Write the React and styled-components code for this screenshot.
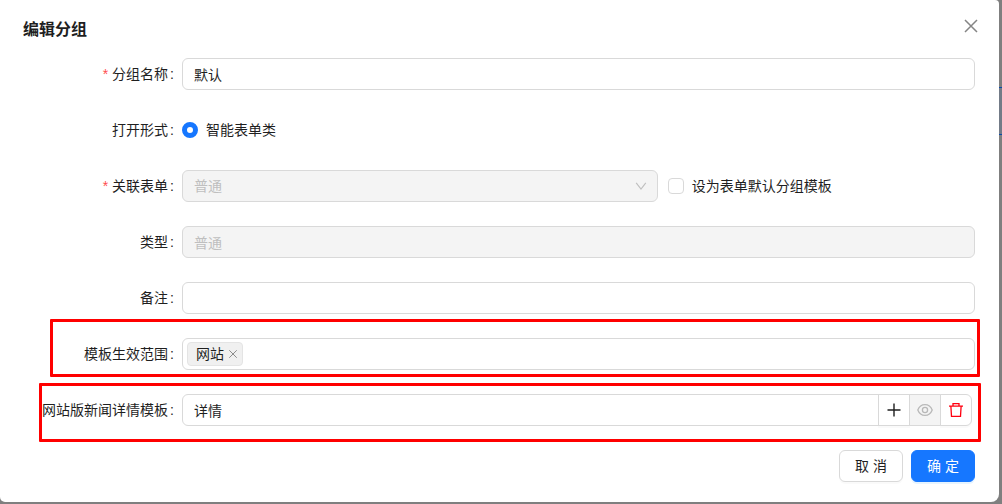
import React, { useState } from 'react'
import styled, { createGlobalStyle, css } from 'styled-components'

const GlobalStyle = createGlobalStyle`
  * {
    box-sizing: border-box;
  }

  body {
    margin: 0;
    background: #7f7f7f;
    color: #1f1f1f;
    font-family: 'Liberation Sans', 'Noto Sans CJK SC', sans-serif;
    font-size: 14px;
    line-height: 22px;
  }

  input, select, button {
    font: inherit;
    color: inherit;
  }
`

const Page = styled.div`
  display: grid;
  grid-template-columns: 1fr 3px;
  min-height: 100vh;
  align-items: start;
`

const Backdrop = styled.div`
  align-self: stretch;
  padding-top: 87px;
`

const ActiveItem = styled.div`
  height: 48px;
  background: #737b87;
  border: solid #0b4aa8;
  border-width: 1px 0;
`

const Dialog = styled.section`
  position: relative;
  padding: 20px 24px 20px 23px;
  background: white;
  border-radius: 0 4px 8px 5px;
`

const Title = styled.h1`
  margin: 0 0 18px;
  font-size: 16px;
  line-height: 20px;
  font-weight: 600;
`

const CloseButton = styled.button`
  position: absolute;
  top: 15px;
  right: 17px;
  display: flex;
  align-items: center;
  justify-content: center;
  width: 22px;
  height: 22px;
  padding: 0;
  border: 0;
  background: none;
  color: #858585;
`

const Form = styled.form`
  display: flex;
  flex-direction: column;
  gap: 24px;
`

const Row = styled.div`
  position: relative;
  display: grid;
  grid-template-columns: 159px 1fr;
  align-items: center;
  min-height: 32px;
`

/* Red outline drawn around a highlighted row */
const Marker = styled.span`
  position: absolute;
  inset: ${props => props.$inset};
  border: 3px solid #ff0000;
  border-radius: 1px;
  pointer-events: none;
`

const Label = styled.label`
  justify-self: end;
  white-space: nowrap;

  &::after {
    content: ':';
    margin: 0 8px 0 2px;
  }

  ${props => props.$required && css`
    &::before {
      content: '*';
      margin-right: 4px;
      color: #ff4d4f;
    }
  `}
`

const fieldStyle = css`
  width: 100%;
  height: 32px;
  border: 1px solid #d9d9d9;
  border-radius: 6px;
  background: white;

  &:disabled {
    background: #f4f4f4;
    color: #bfbfbf;
    opacity: 1;
  }
`

const TextInput = styled.input`
  ${fieldStyle}
  padding: 0 11px;
`

const SelectWrap = styled.div`
  display: grid;
  align-items: center;
  width: 60%;

  & > * {
    grid-area: 1 / 1;
  }

  & > svg {
    justify-self: end;
    margin-right: 11px;
    color: #bfbfbf;
    pointer-events: none;
  }
`

const Select = styled.select`
  ${fieldStyle}
  padding: 0 11px;
  appearance: none;
`

const Inline = styled.div`
  display: flex;
  align-items: center;
  gap: 10px;
`

const Choice = styled.label`
  display: flex;
  align-items: center;
  gap: 8px;
`

const Radio = styled.input`
  appearance: none;
  width: 16px;
  height: 16px;
  margin: 0;
  border: 1px solid #d9d9d9;
  border-radius: 50%;

  &:checked {
    border: 5px solid #1677ff;
  }
`

const Checkbox = styled.input`
  appearance: none;
  width: 16px;
  height: 16px;
  margin: 0;
  border: 1px solid #d9d9d9;
  border-radius: 4px;

  &:checked {
    background: #1677ff;
  }
`

const TagBox = styled.div`
  ${fieldStyle}
  display: flex;
  align-items: center;
  gap: 4px;
  padding: 0 4px;
`

const Tag = styled.span`
  display: flex;
  align-items: center;
  gap: 4px;
  height: 24px;
  padding: 0 4px 0 8px;
  border: 1px solid #e4e4e4;
  border-radius: 4px;
  background: #f0f0f0;
`

const TagRemove = styled.button`
  display: flex;
  padding: 0;
  border: 0;
  background: none;
  color: #8c8c8c;
`

const TagSearch = styled.input`
  flex: 1;
  min-width: 0;
  border: 0;
  outline: 0;
  background: none;
`

const Compact = styled.div`
  display: flex;
  margin-right: 3px;

  & > * + * {
    margin-left: -1px;
  }

  & > :not(:first-child) {
    border-top-left-radius: 0;
    border-bottom-left-radius: 0;
  }

  & > :not(:last-child) {
    border-top-right-radius: 0;
    border-bottom-right-radius: 0;
  }
`

const IconButton = styled.button`
  display: flex;
  flex: none;
  align-items: center;
  justify-content: center;
  width: 32px;
  height: 32px;
  padding: 0;
  border: 1px solid #d9d9d9;
  border-radius: 6px;
  background: white;
  color: ${props => props.$danger ? '#ff0010' : '#1f1f1f'};
  box-shadow: 0 2px 0 rgba(0, 0, 0, 0.02);

  &:disabled {
    background: #f4f4f4;
    color: #b8b8b8;
    box-shadow: none;
  }
`

const Footer = styled.footer`
  display: flex;
  justify-content: flex-end;
  gap: 8px;
`

const Button = styled.button`
  height: 32px;
  min-width: 64px;
  padding: 0 15px;
  border: 1px solid ${props => props.$primary ? '#1677ff' : '#d9d9d9'};
  border-radius: 6px;
  background: ${props => props.$primary ? '#1677ff' : 'white'};
  color: ${props => props.$primary ? 'white' : '#1f1f1f'};
  box-shadow: 0 2px 0 ${props => props.$primary ? 'rgba(5, 145, 255, 0.1)' : 'rgba(0, 0, 0, 0.02)'};
`

const Cross = ({ size, width }) => (
  <svg width={size} height={size} viewBox='0 0 16 16' fill='none' stroke='currentColor' strokeWidth={width}>
    <path d='M2 2 14 14M14 2 2 14' />
  </svg>
)

const Chevron = () => (
  <svg width='12' height='12' viewBox='0 0 12 12' fill='none' stroke='currentColor' strokeWidth='1.1'>
    <path d='M1.2 2.8 6 9.2 10.8 2.8' />
  </svg>
)

const Plus = () => (
  <svg width='16' height='16' viewBox='0 0 16 16' fill='none' stroke='currentColor' strokeWidth='1.4'>
    <path d='M8 1.5V14.5M1.5 8H14.5' />
  </svg>
)

const Eye = () => (
  <svg width='16' height='16' viewBox='0 0 16 16' fill='none' stroke='currentColor' strokeWidth='1.3'>
    <path d='M.8 8C2.2 4.4 4.6 2.6 8 2.6S13.8 4.4 15.2 8C13.8 11.6 11.400 13.400 8 13.400S2.200 11.600 .8 8Z' />
    <circle cx='8' cy='8' r='2.6' />
  </svg>
)

const Trash = () => (
  <svg width='16' height='16' viewBox='0 0 16 16' fill='none' stroke='currentColor' strokeWidth='1.3'>
    <path d='M1 4.200H15M5 4V1.600H11V4M2.900 4.500 3.500 14.400H12.500L13.100 4.500' />
  </svg>
)

const App = () => {
  const [name, setName] = useState('默认')
  const [remark, setRemark] = useState('')
  const [template, setTemplate] = useState('详情')
  const [scopes, setScopes] = useState(['网站'])

  return (
    <Page>
      <GlobalStyle />
      <Dialog role='dialog' aria-labelledby='title'>
        <Title id='title'>编辑分组</Title>
        <CloseButton type='button' aria-label='关闭'><Cross size={16} width={1.5} /></CloseButton>

        <Form onSubmit={e => e.preventDefault()}>
          <Row>
            <Label htmlFor='name' $required>分组名称</Label>
            <TextInput id='name' value={name} onChange={e => setName(e.target.value)} />
          </Row>
          <Row>
            <Label htmlFor='mode'>打开形式</Label>
            <Choice>
              <Radio id='mode' type='radio' name='mode' defaultChecked />
              智能表单类
            </Choice>
          </Row>
          <Row>
            <Label htmlFor='form' $required>关联表单</Label>
            <Inline>
              <SelectWrap>
                <Select id='form' disabled>
                  <option>普通</option>
                </Select>
                <Chevron />
              </SelectWrap>
              <Choice>
                <Checkbox type='checkbox' />
                设为表单默认分组模板
              </Choice>
            </Inline>
          </Row>
          <Row>
            <Label htmlFor='type'>类型</Label>
            <TextInput id='type' value='普通' disabled />
          </Row>
          <Row>
            <Label htmlFor='remark'>备注</Label>
            <TextInput id='remark' value={remark} onChange={e => setRemark(e.target.value)} />
          </Row>
          <Row>
            <Label htmlFor='scope'>模板生效范围</Label>
            <TagBox>
              {scopes.map(scope => (
                <Tag key={scope}>
                  {scope}
                  <TagRemove
                    type='button'
                    aria-label={`移除${scope}`}
                    onClick={() => setScopes(scopes.filter(s => s !== scope))}
                  >
                    <Cross size={10} width={1.6} />
                  </TagRemove>
                </Tag>
              ))}
              <TagSearch id='scope' />
            </TagBox>
            <Marker $inset='-19px -5px -7px 27px' />
          </Row>
          <Row>
            <Label htmlFor='template'>网站版新闻详情模板</Label>
            <Compact>
              <TextInput id='template' value={template} onChange={e => setTemplate(e.target.value)} />
              <IconButton type='button' aria-label='添加'><Plus /></IconButton>
              <IconButton type='button' aria-label='预览' disabled><Eye /></IconButton>
              <IconButton type='button' aria-label='删除' $danger><Trash /></IconButton>
            </Compact>
            <Marker $inset='-11px -6px -16px 16px' />
          </Row>
          <Footer>
            <Button type='button'>取 消</Button>
            <Button type='submit' $primary>确 定</Button>
          </Footer>
        </Form>
      </Dialog>
      <Backdrop><ActiveItem /></Backdrop>
    </Page>
  )
}

export default App
